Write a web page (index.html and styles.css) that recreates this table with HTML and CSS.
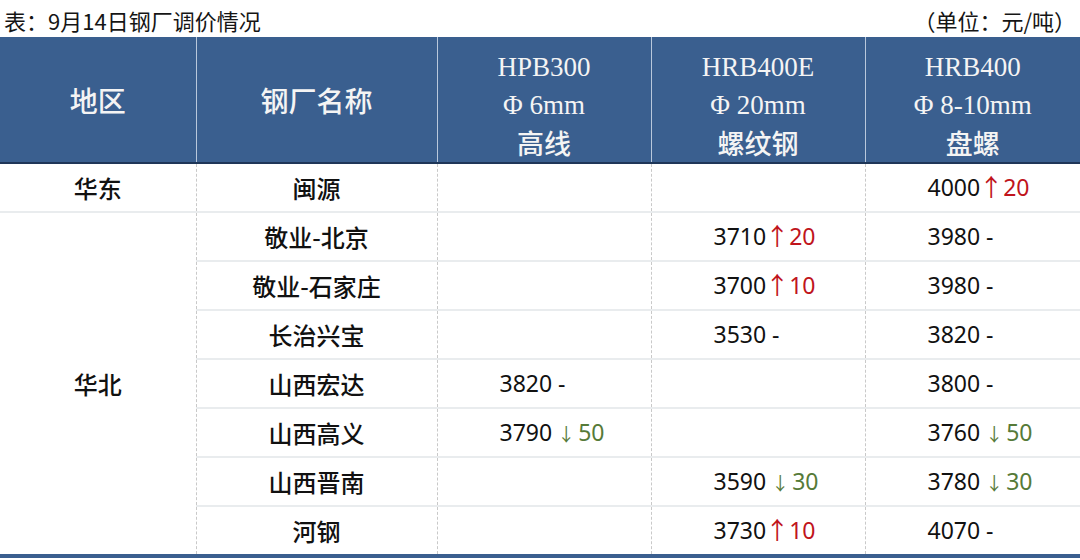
FILE: index.html
```html
<!DOCTYPE html>
<html lang="zh-CN">
<head>
<meta charset="utf-8">
<link rel="stylesheet" href="styles.css">
</head>
<body>
<div class="caption">
  <span class="title">表：9月14日钢厂调价情况</span>
  <span class="unit">（单位：元/吨）</span>
</div>
<table class="prices">
  <colgroup>
    <col class="c-region"><col class="c-mill"><col class="c-p1"><col class="c-p2"><col class="c-p3">
  </colgroup>
  <thead>
    <tr>
      <th class="h-cjk first">地区</th>
      <th class="h-cjk">钢厂名称</th>
      <th class="h-multi"><div class="lat">HPB300</div><div class="lat">Φ 6mm</div><div class="cjk">高线</div></th>
      <th class="h-multi"><div class="lat">HRB400E</div><div class="lat">Φ 20mm</div><div class="cjk">螺纹钢</div></th>
      <th class="h-multi"><div class="lat">HRB400</div><div class="lat">Φ 8-10mm</div><div class="cjk">盘螺</div></th>
    </tr>
  </thead>
  <tbody>
    <tr>
      <td class="region">华东</td>
      <td class="mill">闽源</td>
      <td class="p"></td>
      <td class="p"></td>
      <td class="p">4000<span class="up">↑</span><span class="upn">20</span></td>
    </tr>
    <tr>
      <td class="region" rowspan="7">华北</td>
      <td class="mill">敬业-北京</td>
      <td class="p"></td>
      <td class="p">3710<span class="up">↑</span><span class="upn">20</span></td>
      <td class="p">3980 -</td>
    </tr>
    <tr>
      <td class="mill">敬业-石家庄</td>
      <td class="p"></td>
      <td class="p">3700<span class="up">↑</span><span class="upn">10</span></td>
      <td class="p">3980 -</td>
    </tr>
    <tr>
      <td class="mill">长治兴宝</td>
      <td class="p"></td>
      <td class="p">3530 -</td>
      <td class="p">3820 -</td>
    </tr>
    <tr>
      <td class="mill">山西宏达</td>
      <td class="p">3820 -</td>
      <td class="p"></td>
      <td class="p">3800 -</td>
    </tr>
    <tr>
      <td class="mill">山西高义</td>
      <td class="p">3790<span class="down">↓</span><span class="downn">50</span></td>
      <td class="p"></td>
      <td class="p">3760<span class="down">↓</span><span class="downn">50</span></td>
    </tr>
    <tr>
      <td class="mill">山西晋南</td>
      <td class="p"></td>
      <td class="p">3590<span class="down">↓</span><span class="downn">30</span></td>
      <td class="p">3780<span class="down">↓</span><span class="downn">30</span></td>
    </tr>
    <tr class="last">
      <td class="mill">河钢</td>
      <td class="p"></td>
      <td class="p">3730<span class="up">↑</span><span class="upn">10</span></td>
      <td class="p">4070 -</td>
    </tr>
  </tbody>
</table>
</body>
</html>
```

FILE: styles.css
```css
html, body {
  margin: 0;
  padding: 0;
  background: #ffffff;
}
body {
  width: 1080px;
  height: 560px;
  overflow: hidden;
  font-family: "Noto Sans", "Noto Sans CJK SC", sans-serif;
  color: #111;
}
.caption {
  height: 37px;
  display: flex;
  justify-content: space-between;
  align-items: center;
  padding: 2px 4px 0 4px;
  box-sizing: border-box;
  font-family: "Noto Sans CJK SC", sans-serif;
  font-size: 22px;
  color: #151515;
}
.prices {
  width: 1080px;
  border-collapse: collapse;
  table-layout: fixed;
}
.c-region { width: 196px; }
.c-mill { width: 241px; }
.c-p1 { width: 214px; }
.c-p2 { width: 214px; }
.c-p3 { width: 215px; }

thead th {
  background: #3a5f8f;
  color: #f4f4f4;
  height: 114px;
  padding: 0;
  font-family: "Noto Sans CJK SC", sans-serif;
  font-weight: 500;
  text-align: center;
  border-left: 1px solid #b9c8dc;
  border-bottom: 2px solid #1f3658;
}
thead th.first { border-left: none; }
.h-cjk {
  font-size: 28px;
  vertical-align: middle;
  padding-top: 6px;
  padding-bottom: 5px;
}
.h-multi {
  vertical-align: top;
  padding-top: 11px;
}
.h-multi .lat {
  height: 38px;
  line-height: 38px;
  font-family: "Liberation Serif", serif;
  font-size: 27px;
}
.h-multi .cjk {
  height: 38px;
  line-height: 38px;
  font-size: 27px;
}

tbody td {
  height: 47px;
  padding: 0;
  border-bottom: 2px solid #e9ecee;
  border-left: 1px dashed #c9c9c9;
  line-height: 47px;
  vertical-align: middle;
  overflow: hidden;
}
tbody td.region { border-left: none; }
tbody tr.last td { border-bottom: 4px solid #3a5f8f; }
tbody td.region[rowspan] { border-bottom: 4px solid #3a5f8f; }

.region, .mill {
  text-align: center;
  font-family: "Noto Sans CJK SC", sans-serif;
  font-weight: 500;
  font-size: 24px;
}
.p {
  text-align: left;
  padding-left: 62px;
  font-family: "Noto Sans", "Noto Sans CJK SC", sans-serif;
  font-size: 23px;
}
.up {
  color: #c0141c;
  font-family: "Noto Sans CJK SC", sans-serif;
  font-size: 24px;
  line-height: 1;
  margin: 0 0 0 -1px;
}
.upn { color: #c0141c; }
.down {
  color: #567a38;
  font-family: "Noto Sans CJK SC", sans-serif;
  font-size: 18px;
  line-height: 1;
  margin: 0 3px 0 5px;
}
.downn { color: #567a38; }
```
